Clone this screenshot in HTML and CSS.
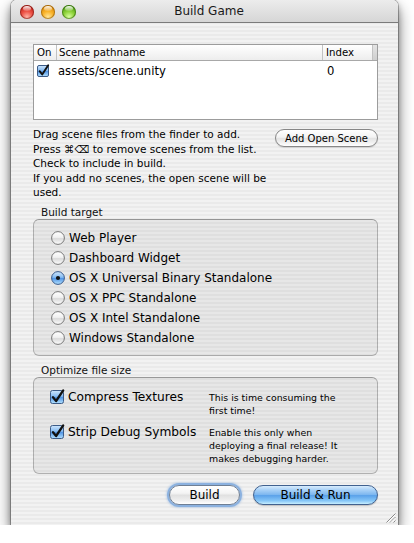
FILE: index.html
```html
<!DOCTYPE html>
<html>
<head>
<meta charset="utf-8">
<title>Build Game</title>
<link rel="stylesheet" href="styles.css">
</head>
<body>
<svg class="defs" aria-hidden="true">
  <defs>
    <linearGradient id="gBlue" x1="0" y1="0" x2="0" y2="1">
      <stop offset="0" stop-color="#cfe6fc"/>
      <stop offset="0.45" stop-color="#86bbf1"/>
      <stop offset="0.52" stop-color="#4f93e4"/>
      <stop offset="1" stop-color="#b4e2ff"/>
    </linearGradient>
    <linearGradient id="gWhite" x1="0" y1="0" x2="0" y2="1">
      <stop offset="0" stop-color="#ffffff"/>
      <stop offset="0.45" stop-color="#f1f1f1"/>
      <stop offset="0.55" stop-color="#dadada"/>
      <stop offset="1" stop-color="#ffffff"/>
    </linearGradient>
  </defs>
</svg>
<div class="window">
  <div class="titlebar">
    <div class="lights">
      <span class="light red"></span>
      <span class="light yellow"></span>
      <span class="light green"></span>
    </div>
    <div class="title">Build Game</div>
    <div></div>
  </div>
  <div class="content">
    <div class="table">
      <div class="thead">
        <div class="th">On</div>
        <div class="th">Scene pathname</div>
        <div class="th">Index</div>
        <div class="th corner"></div>
      </div>
      <div class="trow">
        <div class="td on">
          <svg class="cb-small" viewBox="0 0 12 12" width="12" height="12">
            <rect x="0.5" y="0.5" width="11" height="11" rx="1.5" fill="url(#gBlue)" stroke="#3c5b87"/>
            <path d="M2.6 6.2 L5.2 9.4 L11.2 0.2" fill="none" stroke="#111" stroke-width="1.9" stroke-linecap="round" stroke-linejoin="round"/>
          </svg>
        </div>
        <div class="td name">assets/scene.unity</div>
        <div class="td idx">0</div>
      </div>
    </div>

    <div class="info">
      <p class="help">Drag scene files from the finder to add.<br>Press ⌘⌫ to remove scenes from the list.<br>Check to include in build.<br>If you add no scenes, the open scene will be used.</p>
      <button class="btn btn-small">Add Open Scene</button>
    </div>

    <div class="group-label">Build target</div>
    <div class="group targets">
      <div class="radio-row"><svg class="radio" viewBox="0 0 14 14" width="14" height="14"><circle cx="7" cy="7" r="6.4" fill="url(#gWhite)" stroke="#777777"/></svg><span>Web Player</span></div>
      <div class="radio-row"><svg class="radio" viewBox="0 0 14 14" width="14" height="14"><circle cx="7" cy="7" r="6.4" fill="url(#gWhite)" stroke="#777777"/></svg><span>Dashboard Widget</span></div>
      <div class="radio-row"><svg class="radio" viewBox="0 0 14 14" width="14" height="14"><circle cx="7" cy="7" r="6.4" fill="url(#gBlue)" stroke="#39598a"/><circle cx="7" cy="7" r="2.1" fill="#111"/></svg><span>OS X Universal Binary Standalone</span></div>
      <div class="radio-row"><svg class="radio" viewBox="0 0 14 14" width="14" height="14"><circle cx="7" cy="7" r="6.4" fill="url(#gWhite)" stroke="#777777"/></svg><span>OS X PPC Standalone</span></div>
      <div class="radio-row"><svg class="radio" viewBox="0 0 14 14" width="14" height="14"><circle cx="7" cy="7" r="6.4" fill="url(#gWhite)" stroke="#777777"/></svg><span>OS X Intel Standalone</span></div>
      <div class="radio-row"><svg class="radio" viewBox="0 0 14 14" width="14" height="14"><circle cx="7" cy="7" r="6.4" fill="url(#gWhite)" stroke="#777777"/></svg><span>Windows Standalone</span></div>
    </div>

    <div class="group-label label2">Optimize file size</div>
    <div class="group options">
      <div class="check-row">
        <svg class="cb" viewBox="0 0 14 14" width="14" height="14">
          <rect x="0.5" y="0.5" width="13" height="13" rx="2" fill="url(#gBlue)" stroke="#3c5b87"/>
          <path d="M3 7.2 L6.1 11 L13.2 0.4" fill="none" stroke="#111" stroke-width="2.3" stroke-linecap="round" stroke-linejoin="round"/>
        </svg>
        <span>Compress Textures</span>
      </div>
      <p class="desc">This is time consuming the first time!</p>
      <div class="check-row">
        <svg class="cb" viewBox="0 0 14 14" width="14" height="14">
          <rect x="0.5" y="0.5" width="13" height="13" rx="2" fill="url(#gBlue)" stroke="#3c5b87"/>
          <path d="M3 7.2 L6.1 11 L13.2 0.4" fill="none" stroke="#111" stroke-width="2.3" stroke-linecap="round" stroke-linejoin="round"/>
        </svg>
        <span>Strip Debug Symbols</span>
      </div>
      <p class="desc">Enable this only when deploying a final release! It makes debugging harder.</p>
    </div>

    <div class="actions">
      <button class="btn btn-build">Build</button>
      <button class="btn btn-default">Build &amp; Run</button>
    </div>
  </div>
  <svg class="grip" viewBox="0 0 11 11" width="11" height="11">
    <path d="M10.5 1.5 L1.5 10.5 M10.5 5 L5 10.5 M10.5 8.5 L8.5 10.5" stroke="#8a8a8a" stroke-width="1"/>
    <path d="M10.5 2.5 L2.5 10.5 M10.5 6 L6 10.5" stroke="#ffffff" stroke-width="1"/>
  </svg>
</div>
</body>
</html>
```

FILE: styles.css
```css
* { box-sizing: border-box; }
html, body { margin: 0; padding: 0; background: #ffffff; }
body {
  font-family: "DejaVu Sans", "Liberation Sans", sans-serif;
  color: #000;
}
.defs { position: absolute; width: 0; height: 0; overflow: hidden; }

.window {
  position: relative;
  width: 387px;
  margin-left: 11px;
  border-radius: 6px 6px 0 0;
  overflow: hidden;
  background: repeating-linear-gradient(#f2f2f2 0 2px, #eaeaea 2px 4px);
  box-shadow: 0 0 0 1px rgba(0,0,0,0.25), 0 8px 16px rgba(0,0,0,0.55), 0 3px 6px rgba(0,0,0,0.3);
}

.titlebar {
  height: 23px;
  display: grid;
  grid-template-columns: 1fr auto 1fr;
  align-items: center;
  padding-left: 9px;
  background: linear-gradient(#ececec, #d6d6d6);
  border-bottom: 1px solid #7b7b7b;
}
.lights { display: flex; gap: 7px; }
.light {
  position: relative;
  width: 14px;
  height: 14px;
  border-radius: 50%;
}
.light::after {
  content: "";
  position: absolute;
  left: 3px;
  top: 1px;
  width: 8px;
  height: 5px;
  border-radius: 50%;
  background: linear-gradient(rgba(255,255,255,0.95), rgba(255,255,255,0.15));
}
.red {
  background: radial-gradient(circle at 50% 85%, #ffb4a6 0, #ee5448 40%, #c5231b 78%, #8e1610 100%);
  box-shadow: inset 0 0 0 1px rgba(110,20,15,0.55);
}
.yellow {
  background: radial-gradient(circle at 50% 85%, #ffe69a 0, #f9b42c 40%, #dc8a0a 78%, #9b5f05 100%);
  box-shadow: inset 0 0 0 1px rgba(130,80,5,0.55);
}
.green {
  background: radial-gradient(circle at 50% 85%, #d9ffa0 0, #8fd33b 40%, #4f9e14 78%, #336b0a 100%);
  box-shadow: inset 0 0 0 1px rgba(40,90,10,0.55);
}
.title {
  font-size: 12px;
  color: #1a1a1a;
  line-height: 23px;
}

.content {
  padding: 21px 20px 20px 22px;
}

.table {
  height: 76px;
  border: 1px solid #9c9c9c;
  background: #ffffff;
}
.thead, .trow {
  display: grid;
  grid-template-columns: 23px 266px 50px 4px;
}
.thead {
  height: 16px;
  border-bottom: 1px solid #a8a8a8;
  background: linear-gradient(#ffffff, #ededed);
}
.th {
  font-size: 10.2px;
  line-height: 15px;
  padding-left: 3px;
  border-right: 1px solid #c2c2c2;
  white-space: nowrap;
  overflow: hidden;
}
.th:nth-child(2) { padding-left: 2px; }
.th.corner { border-right: none; background: linear-gradient(#e4e4e4, #cfcfcf); }
.trow { height: 20px; align-items: center; }
.td { font-size: 11.6px; line-height: 20px; }
.td.on { padding-left: 3px; display: flex; align-items: center; }
.cb-small { display: block; overflow: visible; }
.td.name { padding-left: 1px; }
.td.idx { padding-left: 4px; }

.info {
  display: flex;
  justify-content: space-between;
  align-items: flex-start;
  margin-top: 7px;
}
.help {
  margin: 0;
  width: 240px;
  font-size: 10.5px;
  line-height: 14.5px;
}
.btn {
  font-family: inherit;
  color: #000;
  padding: 0;
  cursor: default;
}
.btn-small {
  margin-top: 2px;
  width: 103px;
  height: 18px;
  font-size: 10px;
  border: 1px solid #878787;
  border-radius: 9px;
  background: linear-gradient(#ffffff 0%, #f3f3f3 45%, #e3e3e3 52%, #f2f2f2 80%, #ffffff 100%);
  box-shadow: 0 1px 1px rgba(0,0,0,0.12);
}

.group-label {
  margin-top: 5px;
  padding-left: 8px;
  font-size: 10.5px;
  line-height: 14px;
  color: #111;
}
.label2 { margin-top: 7px; }
.group {
  border: 1px solid rgba(0,0,0,0.24);
  border-top-color: rgba(0,0,0,0.34);
  border-radius: 6px;
  background: rgba(0,0,0,0.045);
}
.targets {
  padding: 8px 0 7px 17px;
}
.radio-row {
  height: 20px;
  display: flex;
  align-items: center;
  gap: 4px;
  font-size: 12px;
}
.radio { display: block; flex: none; }

.options {
  display: grid;
  grid-template-columns: 159px 1fr;
  row-gap: 9px;
  padding: 13px 0 8px 16px;
}
.check-row {
  display: flex;
  align-items: center;
  gap: 4px;
  height: 13px;
  font-size: 12.2px;
  line-height: 13px;
}
.cb { display: block; flex: none; overflow: visible; }
.desc {
  margin: 0;
  width: 142px;
  font-size: 9.4px;
  line-height: 13px;
}

.actions {
  display: flex;
  justify-content: flex-end;
  gap: 13px;
  margin-top: 11px;
}
.btn-build, .btn-default {
  height: 20px;
  font-size: 12px;
  border-radius: 10px;
}
.btn-build {
  width: 71px;
  border: 1px solid #6f7f94;
  background: linear-gradient(#ffffff 0%, #f4f4f4 40%, #e1e1e1 52%, #efefef 80%, #ffffff 100%);
  box-shadow: 0 0 0 2px rgba(120,165,220,0.75), 0 0 2px 3px rgba(120,165,220,0.35);
}
.btn-default {
  width: 125px;
  border: 1px solid #41618f;
  background: linear-gradient(#d7ecfd 0%, #a9d1f7 22%, #7db7ef 48%, #5ba2ea 53%, #86c6f7 82%, #c6eeff 100%);
  box-shadow: 0 1px 1px rgba(0,0,0,0.2);
}

.grip {
  position: absolute;
  right: 2px;
  bottom: 2px;
}
```
